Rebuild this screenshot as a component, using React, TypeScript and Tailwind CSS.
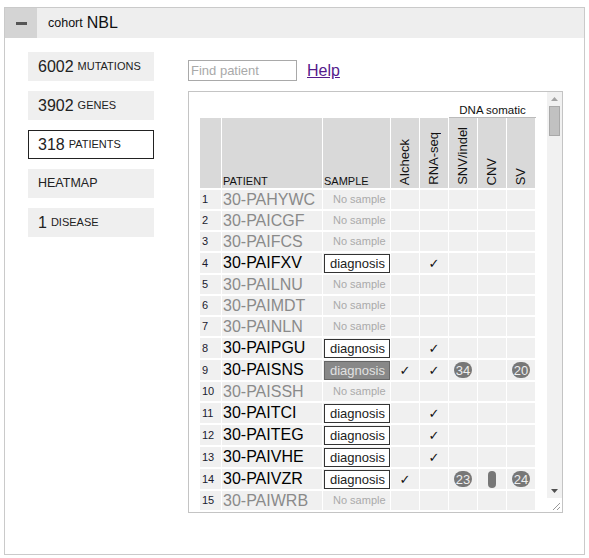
import React from "react";

type Row = {
  n: number;
  id: string;
  sample: null | "diag" | "sel";
  ai?: boolean;
  rna?: boolean;
  snv?: string;
  cnv?: boolean;
  sv?: string;
};

const rows: Row[] = [
  { n: 1, id: "30-PAHYWC", sample: null },
  { n: 2, id: "30-PAICGF", sample: null },
  { n: 3, id: "30-PAIFCS", sample: null },
  { n: 4, id: "30-PAIFXV", sample: "diag", rna: true },
  { n: 5, id: "30-PAILNU", sample: null },
  { n: 6, id: "30-PAIMDT", sample: null },
  { n: 7, id: "30-PAINLN", sample: null },
  { n: 8, id: "30-PAIPGU", sample: "diag", rna: true },
  { n: 9, id: "30-PAISNS", sample: "sel", ai: true, rna: true, snv: "34", sv: "20" },
  { n: 10, id: "30-PAISSH", sample: null },
  { n: 11, id: "30-PAITCI", sample: "diag", rna: true },
  { n: 12, id: "30-PAITEG", sample: "diag", rna: true },
  { n: 13, id: "30-PAIVHE", sample: "diag", rna: true },
  { n: 14, id: "30-PAIVZR", sample: "diag", ai: true, snv: "23", cnv: true, sv: "24" },
  { n: 15, id: "30-PAIWRB", sample: null },
];

function Badge({ v }: { v: string }) {
  return (
    <span className="w-[18px] h-[16px] rounded-full bg-[#777] text-[#eee] text-[13px] leading-none flex items-center justify-center">
      {v}
    </span>
  );
}

function Check() {
  return <span className="text-[13px] leading-none text-[#111] font-['DejaVu_Sans',sans-serif]">✓</span>;
}

function VLabel({ t }: { t: string }) {
  return (
    <div className="h-[70px] bg-[#d9d9d9] flex items-end justify-center pb-[3px]">
      <span className="[writing-mode:vertical-rl] rotate-180 text-[13px] leading-[14px] text-[#111]">{t}</span>
    </div>
  );
}

function SideBtn({ num, label, active }: { num?: string; label: string; active?: boolean }) {
  return (
    <div
      className={
        active
          ? "w-[126px] h-[29px] flex items-center pl-[9px] bg-white border border-[#222] text-[#222]"
          : "w-[126px] h-[29px] flex items-center pl-[10px] bg-[#efefef] text-[#222]"
      }
    >
      {num ? <span className="text-[16px] leading-none">{num}</span> : null}
      {num ? <span className="w-[4px]" /> : null}
      <span className={num ? "text-[11px] leading-none" : "text-[12.5px] leading-none"}>{label}</span>
    </div>
  );
}

export default function App() {
  return (
    <div className="w-[589px] h-[558px] bg-white pt-[7px] pl-[4px] font-['Liberation_Sans',Arial,sans-serif]">
      <div className="w-[581px] h-[548px] border border-[#cacaca] flex flex-col">
        <div className="flex h-[30px]">
          <div className="w-[32px] bg-[#d4d4d4] flex items-center justify-center">
            <span className="block w-[11px] h-[3px] bg-[#555]" />
          </div>
          <div className="flex-1 bg-[#eeeeee] flex items-center pl-[11px] text-[#111]">
            <span className="text-[12.5px]">cohort</span>
            <span className="text-[16px] ml-[4px]">NBL</span>
          </div>
        </div>
        <div className="flex">
          <div className="w-[183px] pl-[23px] pt-[14px] flex flex-col gap-[10px]">
            <SideBtn num="6002" label="MUTATIONS" />
            <SideBtn num="3902" label="GENES" />
            <SideBtn num="318" label="PATIENTS" active />
            <SideBtn label="HEATMAP" />
            <SideBtn num="1" label="DISEASE" />
          </div>
          <div className="pt-[22px]">
            <div className="flex items-center">
              <input
                placeholder="Find patient"
                className="w-[109px] h-[21px] border border-[#a9a9a9] text-[13px] px-[2px] placeholder:text-[#a9a9a9] outline-none"
              />
              <a href="#" className="ml-[10px] text-[16px] text-[#551a8b] underline leading-none">
                Help
              </a>
            </div>
            <div className="mt-[10px] w-[375px] h-[422px] border border-[#c4c4c4] flex">
              <div className="w-[358px] overflow-hidden pl-[11px]">
                <div className="flex h-[26px]">
                  <div className="w-[249px]" />
                  <div className="w-[87px] border-b border-[#bbbbbb] flex items-end justify-center text-[11.5px] leading-[14px] text-[#111]">
                    DNA somatic
                  </div>
                </div>
                <div className="grid grid-cols-[21px_100px_67px_28px_28px_28px_28px_28px] gap-x-px gap-y-[2px]">
                  <div className="h-[70px] bg-[#d9d9d9]" />
                  <div className="h-[70px] bg-[#d9d9d9] flex items-end pl-[1px] pb-[1px] text-[11px] leading-[12px] text-[#111]">PATIENT</div>
                  <div className="h-[70px] bg-[#d9d9d9] flex items-end pl-[1px] pb-[1px] text-[11px] leading-[12px] text-[#111]">SAMPLE</div>
                  <VLabel t="AIcheck" />
                  <VLabel t="RNA-seq" />
                  <VLabel t="SNV/indel" />
                  <VLabel t="CNV" />
                  <VLabel t="SV" />
                  {rows.map((r) => {
                    const h = r.sample ? "h-[20px]" : "h-[19px]";
                    const c = `${h} bg-[#f0f0f0] flex items-center`;
                    return (
                      <React.Fragment key={r.n}>
                        <div className={`${c} pl-[2px] text-[11px] text-[#1a1a2e]`}>{r.n}</div>
                        <div className={`${c} pl-[1px] text-[16px] ${r.sample ? "text-black" : "text-[#8a8a8a]"}`}>{r.id}</div>
                        <div className={c}>
                          {r.sample === null ? (
                            <span className="pl-[10px] text-[11px] text-[#aaaaaa]">No sample</span>
                          ) : r.sample === "sel" ? (
                            <span className="ml-[1px] w-[66px] h-[19px] bg-[#888] border border-[#666] text-[#e2e2e2] text-[13px] leading-none pl-[5px] flex items-center">
                              diagnosis
                            </span>
                          ) : (
                            <span className="ml-[1px] w-[66px] h-[19px] bg-white border border-[#333] text-[#222] text-[13px] leading-none pl-[5px] flex items-center">
                              diagnosis
                            </span>
                          )}
                        </div>
                        <div className={`${c} justify-center`}>{r.ai ? <Check /> : null}</div>
                        <div className={`${c} justify-center`}>{r.rna ? <Check /> : null}</div>
                        <div className={`${c} justify-center`}>{r.snv ? <Badge v={r.snv} /> : null}</div>
                        <div className={`${c} justify-center`}>
                          {r.cnv ? <span className="w-[8px] h-[17px] rounded-full bg-[#777]" /> : null}
                        </div>
                        <div className={`${c} justify-center`}>{r.sv ? <Badge v={r.sv} /> : null}</div>
                      </React.Fragment>
                    );
                  })}
                </div>
              </div>
              <div className="w-[15px] flex flex-col bg-[#f1f1f1]">
                <div className="h-[14px] flex items-center justify-center">
                  <svg width="7" height="4" viewBox="0 0 7 4">
                    <polygon points="0,4 7,4 3.5,0" fill="#a3a3a3" />
                  </svg>
                </div>
                <div className="mx-[2px] h-[30px] bg-[#c1c1c1] border border-[#a9a9a9]" />
                <div className="flex-1" />
                <div className="h-[14px] flex items-center justify-center">
                  <svg width="7" height="4" viewBox="0 0 7 4">
                    <polygon points="0,0 7,0 3.5,4" fill="#505050" />
                  </svg>
                </div>
                <div className="h-[14px] bg-white flex items-end justify-end">
                  <svg width="14" height="14" viewBox="0 0 14 14">
                    <line x1="12" y1="5" x2="5" y2="12" stroke="#999" strokeWidth="1" />
                    <line x1="12" y1="9" x2="9" y2="12" stroke="#999" strokeWidth="1" />
                  </svg>
                </div>
              </div>
            </div>
          </div>
        </div>
      </div>
    </div>
  );
}
